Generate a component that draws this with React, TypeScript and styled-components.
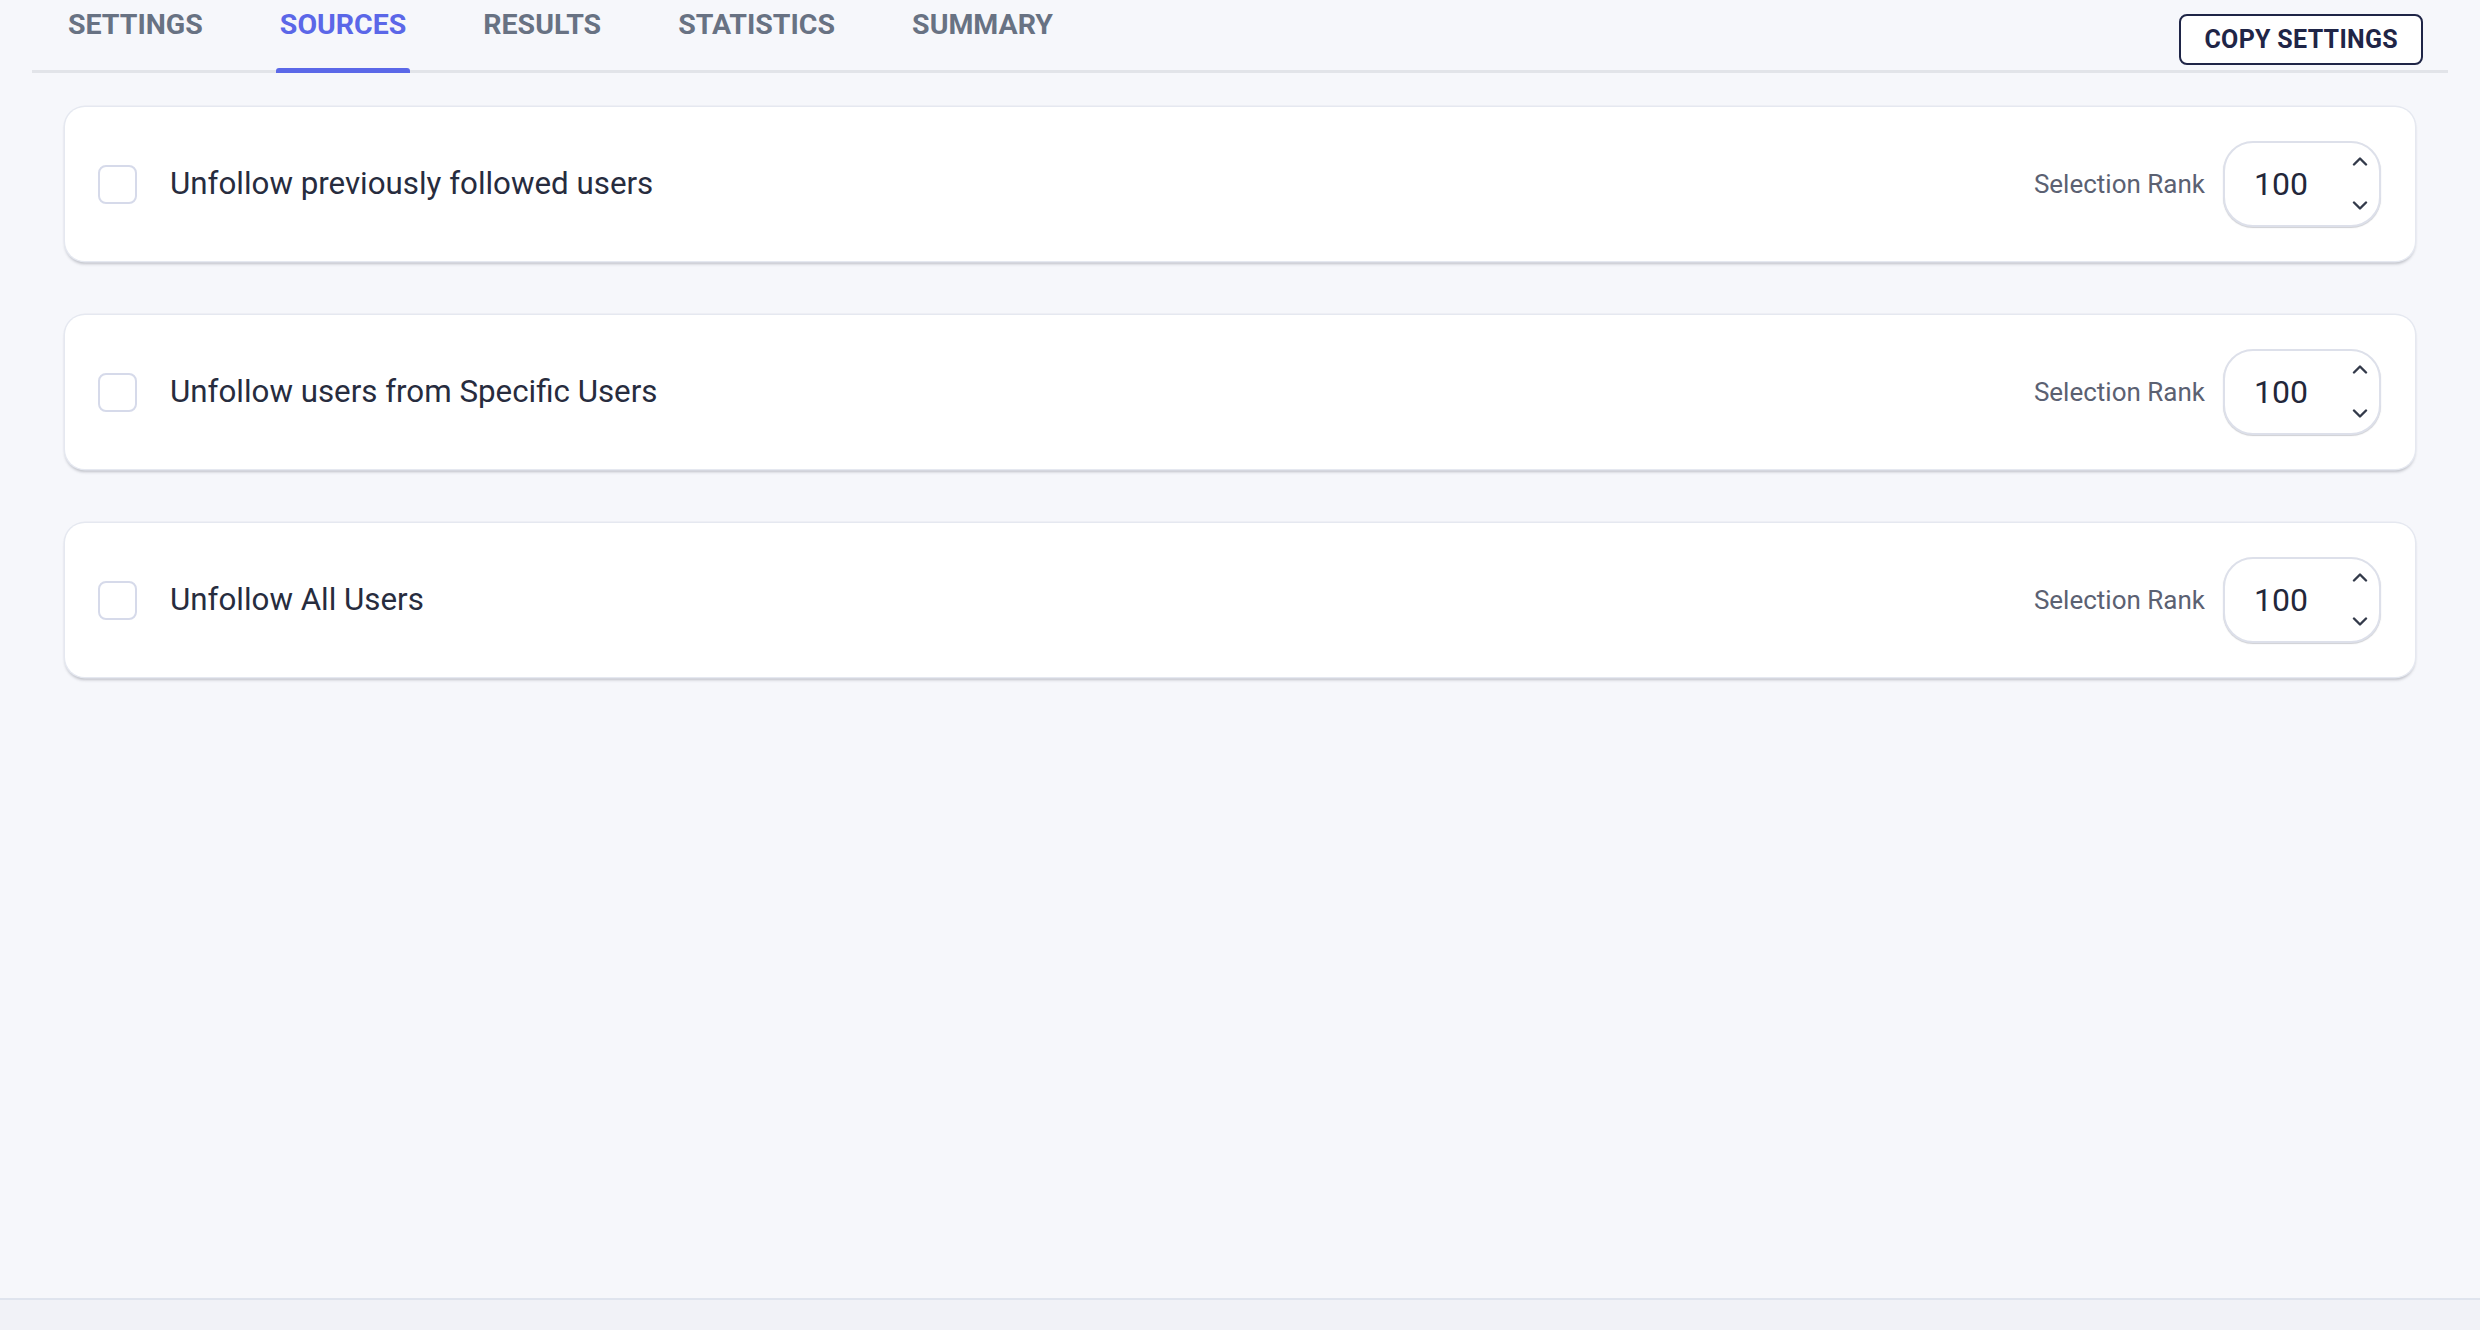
import React from "react";
import styled, { createGlobalStyle } from "styled-components";

const Global = createGlobalStyle`
  html, body {
    margin: 0;
    padding: 0;
    background: #f1f2f7;
    font-family: Roboto, "Liberation Sans", Arial, sans-serif;
  }
  * { box-sizing: border-box; }
`;

const Page = styled.div`
  min-height: 1300px;
  background: #f6f7fb;
  border-bottom: 2px solid #dfe4ee;
  padding: 0 32px;
`;

const Header = styled.div`
  display: flex;
  align-items: flex-start;
  justify-content: space-between;
  height: 73px;
  border-bottom: 3px solid #e2e4e9;
`;

const Tabs = styled.div`
  display: flex;
  gap: 69px;
  margin-left: 32px;
  height: 70px;
`;

const Tab = styled.div<{ $active?: boolean }>`
  position: relative;
  height: 70px;
  padding: 8px 4px 0;
  font-size: 28.5px;
  line-height: 34px;
  font-weight: 700;
  text-transform: uppercase;
  color: ${(p) => (p.$active ? "#5b67e8" : "#687283")};
  cursor: pointer;
`;

const Indicator = styled.span`
  position: absolute;
  left: 0;
  right: 0;
  bottom: -3px;
  height: 5px;
  border-radius: 3px 3px 0 0;
  background: #5b68e8;
`;

const CopyButton = styled.button`
  margin-top: 14px;
  margin-right: 25px;
  height: 51px;
  padding: 0 23px;
  background: #ffffff;
  border: 2px solid #1f2547;
  border-radius: 8px;
  font-family: Roboto, "Liberation Sans", Arial, sans-serif;
  font-size: 25px;
  font-weight: 700;
  letter-spacing: 0.3px;
  color: #1f2547;
  cursor: pointer;
`;

const List = styled.div`
  display: flex;
  flex-direction: column;
  gap: 54px;
  padding: 0 33px;
  margin-top: 34px;
`;

const Card = styled.div`
  display: flex;
  align-items: center;
  height: 154px;
  padding: 0 34px 0 33px;
  background: #ffffff;
  border-radius: 20px;
  box-shadow: 0 0 0 1.5px #e5e8f0, 0 3px 3px rgba(70, 74, 90, 0.32);
`;

const CheckBox = styled.span`
  width: 39px;
  height: 39px;
  flex: none;
  border: 2px solid #d6daea;
  border-radius: 8px;
  background: #ffffff;
`;

const Label = styled.span`
  margin-left: 33px;
  margin-top: -2px;
  font-size: 31.3px;
  color: #272c3e;
`;

const RankLabel = styled.span`
  margin-left: auto;
  margin-right: 18px;
  font-size: 26px;
  color: #5b6172;
`;

const Spinner = styled.div`
  display: flex;
  align-items: stretch;
  width: 158px;
  height: 86px;
  border: 2px solid #dde0ea;
  border-radius: 30px;
  box-shadow: 0 1px 1px rgba(60, 64, 80, 0.25);
  background: #ffffff;
`;

const Value = styled.span`
  flex: 1;
  display: flex;
  align-items: center;
  padding-left: 29px;
  font-size: 32px;
  color: #23273a;
`;

const Arrows = styled.div`
  display: flex;
  flex-direction: column;
  justify-content: space-between;
  padding: 14px 11px 15px 0;
`;

const Chevron = ({ up }: { up?: boolean }) => (
  <svg width="16" height="9" viewBox="0 0 16 9" fill="none">
    <polyline
      points={up ? "2,7.5 8,1.5 14,7.5" : "2,1.5 8,7.5 14,1.5"}
      stroke="#333a4a"
      strokeWidth="2.4"
      strokeLinecap="round"
      strokeLinejoin="round"
    />
  </svg>
);

const tabs = ["Settings", "Sources", "Results", "Statistics", "Summary"];
const rows = [
  "Unfollow previously followed users",
  "Unfollow users from Specific Users",
  "Unfollow All Users",
];

export default function App() {
  return (
    <>
      <Global />
      <Page>
        <Header>
          <Tabs>
            {tabs.map((t) => (
              <Tab key={t} $active={t === "Sources"}>
                {t}
                {t === "Sources" && <Indicator />}
              </Tab>
            ))}
          </Tabs>
          <CopyButton>COPY SETTINGS</CopyButton>
        </Header>
        <List>
          {rows.map((r) => (
            <Card key={r}>
              <CheckBox />
              <Label>{r}</Label>
              <RankLabel>Selection Rank</RankLabel>
              <Spinner>
                <Value>100</Value>
                <Arrows>
                  <Chevron up />
                  <Chevron />
                </Arrows>
              </Spinner>
            </Card>
          ))}
        </List>
      </Page>
    </>
  );
}
